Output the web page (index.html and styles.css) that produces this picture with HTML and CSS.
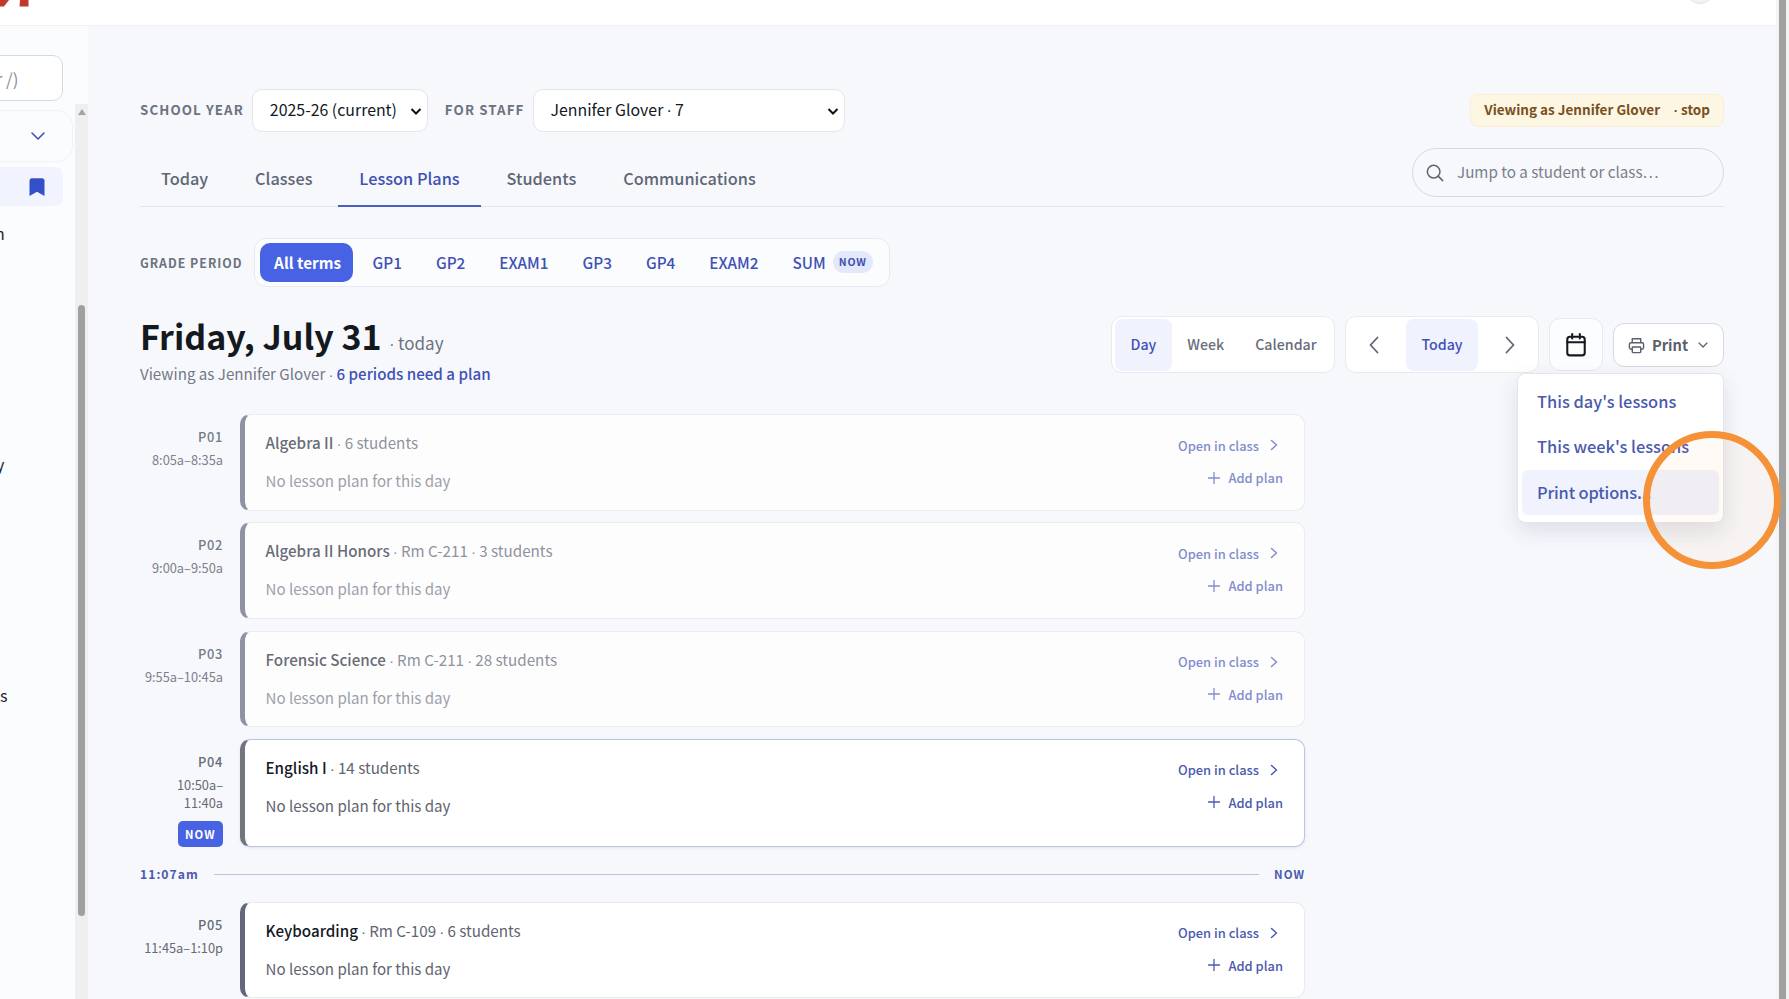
FILE: index.html
```html
<!DOCTYPE html>
<html lang="en">

<head>
    <meta charset="UTF-8">
    <meta name="viewport" content="width=device-width, initial-scale=1.0">
    <title>Lesson Plans</title>
    <link rel="stylesheet" href="styles.css">
</head>

<body>
    <header class="topbar">
        <svg class="logo" width="30" height="7" viewBox="0 0 30 7" fill="#c0392b"><path d="M0 0h9L4 6.500H0z"/><path d="M20 0h8.500v6.500H19.500z"/></svg>
        <div class="avatar"></div>
    </header>
    <div class="shell">
        <nav class="sidebar">
            <div class="side-inner">
                <div class="side-search"><span>r /)</span></div>
                <div class="side-list">
                    <div class="side-group">
                        <svg width="16" height="16" viewBox="0 0 16 16" fill="none" stroke="#3f51b5" stroke-width="1.6" stroke-linecap="round" stroke-linejoin="round"><path d="M2 5l6 6 6-6"/></svg>
                    </div>
                    <div class="side-active">
                        <svg width="16" height="18" viewBox="0 0 16 18" fill="#3450c8"><path d="M.5 2.500C.5 1.200 1.500.2 2.800.2h10.400c1.300 0 2.300 1 2.300 2.300V18L8 13.800.5 18z"/></svg>
                    </div>
                    <div class="side-text first">n</div>
                    <div class="side-text second">y</div>
                    <div class="side-text third">s</div>
                </div>
            </div>
            <div class="side-scroll">
                <div class="arrow-up"></div>
                <div class="side-thumb"></div>
            </div>
        </nav>

        <main class="main">
            <div class="filters">
                <span class="caps">School year</span>
                <div class="select year"><span>2025-26 (current)</span>
                    <svg width="12" height="12" viewBox="0 0 12 12" fill="none" stroke="#111" stroke-width="2"><path d="M1.500 4l4.500 4.500L10.500 4"/></svg>
                </div>
                <span class="caps staff-label">For staff</span>
                <div class="select staff"><span>Jennifer Glover <i class="dot">·</i> 7</span>
                    <svg width="12" height="12" viewBox="0 0 12 12" fill="none" stroke="#111" stroke-width="2"><path d="M1.500 4l4.500 4.500L10.500 4"/></svg>
                </div>
                <div class="viewing">Viewing as Jennifer Glover <span class="stop"><i class="dot">·</i> stop</span></div>
            </div>

            <div class="tabs">
                <a class="tab">Today</a>
                <a class="tab">Classes</a>
                <a class="tab active">Lesson Plans</a>
                <a class="tab">Students</a>
                <a class="tab">Communications</a>
                <div class="jump">
                    <svg width="18" height="18" viewBox="0 0 20 20" fill="none" stroke="#5f6472" stroke-width="1.700" stroke-linecap="round"><circle cx="8.500" cy="8.500" r="7"/><path d="M13.500 13.500l5 5"/></svg>
                    <span>Jump to a student or class…</span>
                </div>
            </div>

            <div class="periods">
                <span class="caps small">Grade period</span>
                <div class="period-box">
                    <a class="period active">All terms</a>
                    <a class="period">GP1</a>
                    <a class="period">GP2</a>
                    <a class="period">EXAM1</a>
                    <a class="period">GP3</a>
                    <a class="period">GP4</a>
                    <a class="period">EXAM2</a>
                    <a class="period last">SUM <span class="now-pill">NOW</span></a>
                </div>
            </div>

            <div class="day-head">
                <div class="day-title">
                    <h1>Friday, July 31 <span><i class="dot">·</i> today</span></h1>
                    <p>Viewing as Jennifer Glover <i class="dot">·</i> <a>6 periods need a plan</a></p>
                </div>
                <div class="day-tools">
                    <div class="seg">
                        <a class="seg-item on">Day</a>
                        <a class="seg-item">Week</a>
                        <a class="seg-item">Calendar</a>
                    </div>
                    <div class="seg nav">
                        <a class="seg-arrow"><svg width="12" height="18" viewBox="0 0 12 18" fill="none" stroke="#5f6472" stroke-width="1.800" stroke-linecap="round" stroke-linejoin="round"><path d="M9.500 1.500L2.500 9l7 7.500"/></svg></a>
                        <a class="seg-item on today">Today</a>
                        <a class="seg-arrow"><svg width="12" height="18" viewBox="0 0 12 18" fill="none" stroke="#5f6472" stroke-width="1.800" stroke-linecap="round" stroke-linejoin="round"><path d="M2.500 1.500L9.500 9l-7 7.500"/></svg></a>
                    </div>
                    <a class="cal-btn">
                        <svg width="22" height="24" viewBox="0 0 20 22" fill="none" stroke="#14181f" stroke-width="1.900" stroke-linecap="round"><rect x="2" y="3.500" width="16" height="17" rx="2.500"/><path d="M2 8.500h16M6.500 1v4M13.500 1v4"/></svg>
                    </a>
                    <div class="print-wrap">
                        <a class="print-btn">
                            <svg width="17" height="17" viewBox="0 0 18 18" fill="none" stroke="#5a5f6b" stroke-width="1.500" stroke-linejoin="round"><path d="M4.500 6V1.800h9V6"/><rect x="1.500" y="6" width="15" height="7" rx="1.800"/><rect x="4.500" y="10.500" width="9" height="6" rx=".8" fill="#fff"/></svg>
                            <span>Print</span>
                            <svg class="caret" width="10" height="10" viewBox="0 0 10 10" fill="none" stroke="#5a5f6b" stroke-width="1.200" stroke-linecap="round" stroke-linejoin="round"><path d="M1 3l4 4 4-4"/></svg>
                        </a>
                        <div class="print-menu">
                            <a class="menu-item">This day's lessons</a>
                            <a class="menu-item">This week's lessons</a>
                            <a class="menu-item hover">Print options...</a>
                        </div>
                    </div>
                </div>
            </div>

            <section class="schedule">
                <div class="row past">
                    <div class="time"><b>P01</b><span>8:05a–8:35a</span></div>
                    <div class="card">
                        <div class="card-info">
                            <div class="card-name"><strong>Algebra II</strong> <i class="dot">·</i> 6 students</div>
                            <div class="card-note">No lesson plan for this day</div>
                        </div>
                        <div class="card-acts">
                            <a class="act">Open in class <svg class="chev" width="8" height="12" viewBox="0 0 8 12" fill="none" stroke="currentColor" stroke-width="1.500" stroke-linecap="round" stroke-linejoin="round"><path d="M1.500 1.500L6.500 6l-5 4.500"/></svg></a>
                            <a class="act add"><svg width="14" height="14" viewBox="0 0 14 14" fill="none" stroke="currentColor" stroke-width="1.300" stroke-linecap="round"><path d="M7 1.500v11M1.500 7h11"/></svg> Add plan</a>
                        </div>
                    </div>
                </div>
                <div class="row past">
                    <div class="time"><b>P02</b><span>9:00a–9:50a</span></div>
                    <div class="card">
                        <div class="card-info">
                            <div class="card-name"><strong>Algebra II Honors</strong> <i class="dot">·</i> Rm C-211 <i class="dot">·</i> 3 students</div>
                            <div class="card-note">No lesson plan for this day</div>
                        </div>
                        <div class="card-acts">
                            <a class="act">Open in class <svg class="chev" width="8" height="12" viewBox="0 0 8 12" fill="none" stroke="currentColor" stroke-width="1.500" stroke-linecap="round" stroke-linejoin="round"><path d="M1.500 1.500L6.500 6l-5 4.500"/></svg></a>
                            <a class="act add"><svg width="14" height="14" viewBox="0 0 14 14" fill="none" stroke="currentColor" stroke-width="1.300" stroke-linecap="round"><path d="M7 1.500v11M1.500 7h11"/></svg> Add plan</a>
                        </div>
                    </div>
                </div>
                <div class="row past">
                    <div class="time"><b>P03</b><span>9:55a–10:45a</span></div>
                    <div class="card">
                        <div class="card-info">
                            <div class="card-name"><strong>Forensic Science</strong> <i class="dot">·</i> Rm C-211 <i class="dot">·</i> 28 students</div>
                            <div class="card-note">No lesson plan for this day</div>
                        </div>
                        <div class="card-acts">
                            <a class="act">Open in class <svg class="chev" width="8" height="12" viewBox="0 0 8 12" fill="none" stroke="currentColor" stroke-width="1.500" stroke-linecap="round" stroke-linejoin="round"><path d="M1.500 1.500L6.500 6l-5 4.500"/></svg></a>
                            <a class="act add"><svg width="14" height="14" viewBox="0 0 14 14" fill="none" stroke="currentColor" stroke-width="1.300" stroke-linecap="round"><path d="M7 1.500v11M1.500 7h11"/></svg> Add plan</a>
                        </div>
                    </div>
                </div>
                <div class="row current">
                    <div class="time"><b>P04</b><span>10:50a–<br>11:40a</span><em>NOW</em></div>
                    <div class="card">
                        <div class="card-info">
                            <div class="card-name"><strong>English I</strong> <i class="dot">·</i> 14 students</div>
                            <div class="card-note">No lesson plan for this day</div>
                        </div>
                        <div class="card-acts">
                            <a class="act">Open in class <svg class="chev" width="8" height="12" viewBox="0 0 8 12" fill="none" stroke="currentColor" stroke-width="1.500" stroke-linecap="round" stroke-linejoin="round"><path d="M1.500 1.500L6.500 6l-5 4.500"/></svg></a>
                            <a class="act add"><svg width="14" height="14" viewBox="0 0 14 14" fill="none" stroke="currentColor" stroke-width="1.300" stroke-linecap="round"><path d="M7 1.500v11M1.500 7h11"/></svg> Add plan</a>
                        </div>
                    </div>
                </div>
                <div class="now-line">
                    <span class="now-time">11:07am</span>
                    <span class="now-rule"></span>
                    <span class="now-label">NOW</span>
                </div>
                <div class="row future">
                    <div class="time"><b>P05</b><span>11:45a–1:10p</span></div>
                    <div class="card">
                        <div class="card-info">
                            <div class="card-name"><strong>Keyboarding</strong> <i class="dot">·</i> Rm C-109 <i class="dot">·</i> 6 students</div>
                            <div class="card-note">No lesson plan for this day</div>
                        </div>
                        <div class="card-acts">
                            <a class="act">Open in class <svg class="chev" width="8" height="12" viewBox="0 0 8 12" fill="none" stroke="currentColor" stroke-width="1.500" stroke-linecap="round" stroke-linejoin="round"><path d="M1.500 1.500L6.500 6l-5 4.500"/></svg></a>
                            <a class="act add"><svg width="14" height="14" viewBox="0 0 14 14" fill="none" stroke="currentColor" stroke-width="1.300" stroke-linecap="round"><path d="M7 1.500v11M1.500 7h11"/></svg> Add plan</a>
                        </div>
                    </div>
                </div>
            </section>
        </main>

        <div class="page-scroll"><div class="page-thumb"></div></div>
    </div>
    <div class="click-ring"></div>
</body>

</html>
```

FILE: styles.css
```css
* {
    box-sizing: border-box;
}

html,
body {
    height: 999px;
    margin: 0;
    overflow: hidden;
}

body {
    font-family: "Noto Sans CJK SC", "Noto Sans", sans-serif;
    background-color: #f6f8fc;
    color: #14181f;
    display: flex;
    flex-direction: column;
}

/* the cjk font has a very wide middle dot */
.dot {
    font-family: "Liberation Sans", sans-serif;
    font-style: normal;
    margin: 0 -.3px;
}

.topbar {
    height: 26px;
    background: #fff;
    border-bottom: 1px solid #eef0f4;
    position: relative;
    overflow: hidden;
    flex: none;
}

.logo {
    display: block;
}

.avatar {
    position: absolute;
    left: 1686px;
    top: -24px;
    width: 28px;
    height: 28px;
    border-radius: 50%;
    background: #f2f3f6;
    border: 1px solid #dfe2e8;
}

.shell {
    display: flex;
    flex: 1;
    min-height: 0;
}

/* sidebar, only its right edge is on screen */
.sidebar {
    width: 88px;
    flex: none;
    background: #fbfcfe;
    display: flex;
}

.side-inner {
    width: 75px;
    flex: none;
    overflow: hidden;
}

.side-search {
    margin: 29px 12px 0 -20px;
    height: 46px;
    background: #fff;
    border: 1px solid #d5d9e0;
    border-radius: 10px;
    display: flex;
    align-items: center;
    justify-content: flex-end;
    padding-right: 43.500px;
    font-size: 17px;
    color: #8b8f98;
    white-space: nowrap;
}

.side-list {
    margin-top: 9px;
}

.side-group {
    margin-left: -20px;
    margin-right: 2px;
    height: 52px;
    border: 1px solid #f1f2f6;
    border-left: none;
    border-radius: 0 16px 16px 0;
    display: flex;
    align-items: center;
    justify-content: flex-end;
    padding-right: 26px;
}

.side-active {
    margin-top: 5px;
    margin-right: 12px;
    height: 39px;
    background: #f1f4fe;
    border-radius: 0 8px 8px 0;
    display: flex;
    align-items: center;
    justify-content: flex-end;
    padding-right: 18px;
}

.side-text {
    font-size: 16px;
    line-height: 22px;
    color: #1e2330;
}

.side-text.first {
    margin-top: 16px;
    margin-left: -5px;
}

.side-text.second {
    margin-top: 209px;
    margin-left: -4px;
}

.side-text.third {
    margin-top: 209px;
    margin-left: 0;
}

.side-scroll {
    width: 13px;
    flex: none;
    margin-top: 78px;
    background: #efefef;
    padding-top: 5px;
    position: relative;
}

.arrow-up {
    margin: 0 auto;
    width: 0;
    height: 0;
    border-left: 4.500px solid transparent;
    border-right: 4.500px solid transparent;
    border-bottom: 6px solid #a3a3a3;
}

.side-thumb {
    position: absolute;
    left: 3px;
    top: 201px;
    width: 7px;
    height: 611px;
    border-radius: 4px;
    background: #a0a0a0;
}

/* main column */
.main {
    flex: 1;
    min-width: 0;
    padding: 63px 0 0 52px;
    margin-right: 65px;
}

.filters {
    display: flex;
    align-items: center;
    height: 43px;
}

.caps {
    font-size: 13.300px;
    font-weight: 600;
    letter-spacing: 1.100px;
    text-transform: uppercase;
    color: #6c7280;
    padding-bottom: 2px;
}

.caps.small {
    font-size: 12.300px;
    letter-spacing: 1px;
    padding-bottom: 0;
}

.select {
    height: 43px;
    background: #fff;
    border: 1px solid #e2e5ea;
    border-radius: 10px;
    display: flex;
    align-items: center;
    justify-content: space-between;
    font-size: 15.900px;
    color: #14181f;
    padding: 0 5px 0 17px;
}

.select span {
    padding-bottom: 2px;
}

.year {
    width: 176px;
    margin-left: 8px;
}

.staff-label {
    margin-left: 17px;
}

.staff {
    width: 312px;
    margin-left: 8px;
}

.viewing {
    margin-left: auto;
    height: 33px;
    display: flex;
    align-items: center;
    gap: 14px;
    padding: 0 13px 3px;
    font-size: 13.500px;
    font-weight: 600;
    color: #77501f;
    background: #fdf6e3;
    border: 1px solid #f8efd6;
    border-radius: 8px;
}

.tabs {
    display: flex;
    align-items: flex-end;
    gap: 4.900px;
    border-bottom: 1px solid #e2e5ec;
    height: 75px;
}

.tab {
    height: 47px;
    padding: 0 21px;
    font-size: 16.300px;
    font-weight: 500;
    color: #5f6675;
    line-height: 37px;
    margin-bottom: -1px;
    border-bottom: 2px solid transparent;
}

.tab.active {
    color: #3f51b5;
    border-bottom-color: #4a5fc1;
}

.jump {
    margin-left: auto;
    width: 312px;
    height: 49px;
    margin-bottom: 9px;
    border: 1px solid #d5d9e0;
    border-radius: 25px;
    display: flex;
    align-items: center;
    gap: 13px;
    padding-left: 13px;
    font-size: 15.200px;
    color: #7a7f8b;
}

.jump span {
    padding-bottom: 3px;
}

.periods {
    display: flex;
    align-items: center;
    margin-top: 31px;
}

.period-box {
    display: flex;
    align-items: center;
    margin-left: 11.500px;
    height: 49px;
    padding: 0 3px 0 5px;
    background: #fbfcfe;
    border: 1px solid #e8eaef;
    border-radius: 12px;
    width: 636px;
}

.period {
    font-size: 15.300px;
    font-weight: 500;
    color: #3f51b5;
    padding: 0 17px 2px;
    height: 39px;
    white-space: nowrap;
    display: flex;
    align-items: center;
}

.period.active {
    background: #4763e4;
    color: #fff;
    border-radius: 10px;
    padding: 0 14px 2px;
    width: 93px;
    margin-right: 2.500px;
    font-weight: 600;
}

.period.last {
    padding-right: 0;
}

.now-pill {
    margin-left: 7px;
    font-size: 10.500px;
    font-weight: 600;
    letter-spacing: .8px;
    color: #3f51b5;
    background: #e3e8fb;
    border-radius: 11px;
    padding: 0 6px;
    line-height: 22px;
}

.day-head {
    display: flex;
    justify-content: space-between;
    margin-top: 29px;
    height: 98px;
}

.day-title h1 {
    margin: 0;
    font-size: 34px;
    font-weight: 600;
    line-height: 40px;
    color: #14181f;
    white-space: nowrap;
}

.day-title h1 span {
    font-size: 17px;
    font-weight: 400;
    color: #6c7280;
}

.day-title p {
    margin: -4px 0 0;
    font-size: 15.150px;
    line-height: 24px;
    color: #737885;
}

.day-title a {
    color: #3f51b5;
    font-weight: 500;
}

.day-tools {
    display: flex;
    align-items: flex-start;
    gap: 10px;
    height: 57px;
}

.seg {
    display: flex;
    align-items: center;
    height: 57px;
    width: 224px;
    background: #fff;
    border: 1px solid #e8eaef;
    border-radius: 11px;
    padding: 0 3px;
}

.seg-item {
    font-size: 14.200px;
    font-weight: 500;
    color: #686d7a;
    height: 52px;
    line-height: 50px;
    padding: 0 15.500px;
    border-radius: 8px;
}

.seg-item.on {
    background: #f0f3fd;
    color: #3f51b5;
}

.seg.nav {
    width: 194px;
    justify-content: space-between;
    padding: 0 22px;
}

.seg-arrow {
    display: flex;
}

.cal-btn {
    width: 54px;
    height: 53px;
    margin-top: 2px;
    background: #fcfdfe;
    border: 1px solid #e8eaef;
    border-radius: 11px;
    display: flex;
    align-items: center;
    justify-content: center;
}

.print-wrap {
    position: relative;
    margin-top: 7px;
}

.print-btn {
    width: 111px;
    height: 44px;
    background: #fff;
    border: 1px solid #d5d9e0;
    border-radius: 11px;
    display: flex;
    align-items: center;
    gap: 7px;
    padding-left: 14px;
    font-size: 14.600px;
    font-weight: 600;
    color: #5a5f6b;
}

.print-btn span {
    padding-bottom: 2px;
}

.caret {
    margin-left: 3px;
}

.print-menu {
    position: absolute;
    right: 0;
    top: 50px;
    width: 207px;
    height: 150px;
    background: #fff;
    border: 1px solid #e2e5ea;
    border-radius: 8px;
    box-shadow: 0 8px 22px rgba(30, 40, 70, 0.12);
    padding: 4.500px 4px;
    display: flex;
    flex-direction: column;
}

.menu-item {
    height: 45.500px;
    line-height: 45px;
    padding-left: 15px;
    font-size: 16.400px;
    font-weight: 500;
    color: #4a5aae;
    border-radius: 6px;
}

.menu-item.hover {
    background: #f0f3fd;
    letter-spacing: -.15px;
}

/* schedule rows */
.schedule {
    width: 1165px;
}

.row {
    display: flex;
    height: 96.500px;
    margin-bottom: 11.800px;
}

.time {
    width: 83px;
    flex: none;
    text-align: right;
    padding-top: 14px;
    display: flex;
    flex-direction: column;
    align-items: flex-end;
    font-size: 12.800px;
    line-height: 18px;
    color: #7c818d;
    white-space: nowrap;
}

.time b {
    font-weight: 500;
    letter-spacing: .7px;
    margin-bottom: 5px;
    color: #757a86;
}

.time em {
    margin-top: 9px;
    font-style: normal;
    font-size: 11.300px;
    font-weight: 600;
    letter-spacing: 1px;
    color: #fff;
    background: #4763e4;
    border-radius: 5px;
    line-height: 26px;
    padding: 0 7.500px;
}

.card {
    flex: 1;
    margin-left: 17px;
    background: #fff;
    border: 1px solid #e8eaef;
    border-left: 5px solid #7d8193;
    border-radius: 10px;
    display: flex;
    justify-content: space-between;
    padding: 15px 21px 0 20.500px;
}

.card-name {
    font-size: 15.200px;
    line-height: 24px;
    color: #7c818d;
}

.card-name strong {
    font-weight: 500;
    color: #4f5460;
}

.card-note {
    margin-top: 12px;
    font-size: 15.100px;
    line-height: 24px;
    color: #8d919c;
}

.card-acts {
    display: flex;
    flex-direction: column;
    align-items: flex-end;
    gap: 9.500px;
    padding-top: 3.500px;
}

.act {
    height: 23px;
    display: flex;
    align-items: center;
    font-size: 12.900px;
    font-weight: 500;
}

.chev {
    margin-left: 11px;
    margin-right: 5px;
}

.act.add svg {
    margin-right: 7px;
}

.past .card {
    opacity: 0.85;
}

.past .act {
    color: #6d7bc4;
}

.current {
    height: 108px;
    margin-bottom: 0;
}

.current .card {
    border-color: #bcc4df;
    border-left-color: #71757c;
    box-shadow: 0 1px 3px rgba(60, 80, 140, 0.12);
}

.current .card-name strong,
.future .card-name strong {
    color: #14181f;
}

.current .card-name,
.future .card-name,
.current .card-note,
.future .card-note {
    color: #5f6470;
}

.current .act,
.future .act {
    color: #4a5aae;
}

.current .time,
.future .time {
    color: #656a76;
}

.current .time b,
.future .time b {
    color: #656a76;
}

.future .card {
    border-left-color: #62667a;
}

.now-line {
    display: flex;
    align-items: center;
    height: 55px;
    color: #4a5aae;
    font-size: 12.200px;
    font-weight: 600;
    letter-spacing: 1px;
}

.now-label {
    font-size: 11.500px;
}

.now-rule {
    flex: 1;
    height: 1px;
    background: #b9c1de;
    margin: 0 15px;
}

/* main page scrollbar */
.page-scroll {
    position: absolute;
    right: 0;
    top: 0;
    width: 13px;
    height: 999px;
    background: #f3f3f3;
}

.page-thumb {
    margin: 0 3px;
    width: 7px;
    height: 999px;
    background: #a0a0a0;
}

.click-ring {
    position: absolute;
    left: 1643px;
    top: 431px;
    width: 138px;
    height: 138px;
    border-radius: 50%;
    border: 7px solid #f59237;
    background: rgba(255, 150, 60, 0.05);
}
```
